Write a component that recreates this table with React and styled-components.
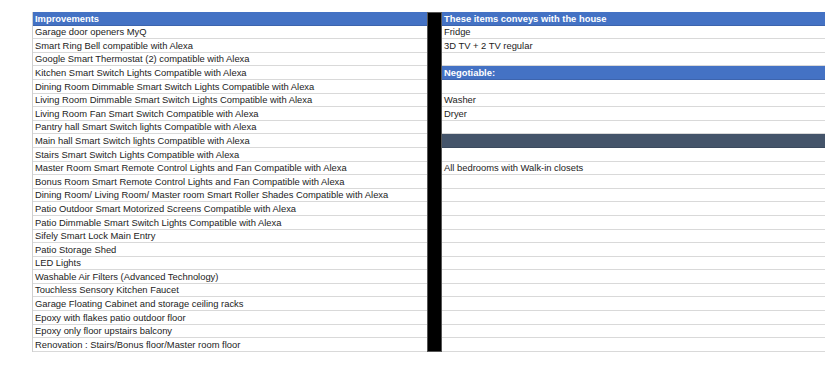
import React from "react";
import styled, { createGlobalStyle } from "styled-components";

const Global = createGlobalStyle`
  html, body { margin: 0; padding: 0; background: #ffffff; }
  body { font-family: "Liberation Sans", Arial, Helvetica, sans-serif; overflow: hidden; }
`;

const Page = styled.div`
  width: 825px;
  height: 376px;
  overflow: hidden;
  padding: 12px 0 0 32px;
  box-sizing: border-box;
  display: flex;
  align-items: flex-start;
`;

const Table = styled.div`
  display: flex;
  flex-direction: column;
  width: ${(p) => p.$width}px;
  flex-shrink: 0;
  border-left: ${(p) => (p.$bordered ? "1px solid #cfcfcf" : "none")};
  box-sizing: border-box;
`;

const Divider = styled.div`
  width: 15px;
  height: 340px;
  flex-shrink: 0;
  background: #000;
  box-shadow: inset 0 0 0 1px #555;
`;

const Row = styled.div`
  height: 13.6px;
  box-sizing: border-box;
  display: flex;
  align-items: center;
  padding-left: 2px;
  font-size: 9.4px;
  line-height: 1;
  white-space: nowrap;
  overflow: hidden;
  color: ${(p) => (p.$kind === "head" ? "#ffffff" : "#1c1c1c")};
  font-weight: ${(p) => (p.$kind === "head" ? 700 : 400)};
  background: ${(p) =>
    p.$kind === "head" ? "#4472c4" : p.$kind === "slate" ? "#44546a" : "#ffffff"};
  border-bottom: 1px solid
    ${(p) => (p.$kind === "head" ? "#3d64ad" : p.$kind === "slate" ? "#3b4a5e" : "#d9d9d9")};
`;

const improvements = [
  "Garage door openers MyQ",
  "Smart Ring Bell compatible with Alexa",
  "Google Smart Thermostat (2) compatible with Alexa",
  "Kitchen Smart Switch Lights Compatible with Alexa",
  "Dining Room Dimmable Smart Switch Lights Compatible with Alexa",
  "Living Room Dimmable Smart Switch Lights Compatible with Alexa",
  "Living Room Fan Smart Switch Compatible with Alexa",
  "Pantry hall Smart Switch lights Compatible with Alexa",
  "Main hall Smart Switch lights Compatible with Alexa",
  "Stairs Smart Switch Lights Compatible with Alexa",
  "Master Room Smart Remote Control Lights and Fan Compatible with Alexa",
  "Bonus Room Smart Remote Control Lights and Fan Compatible with Alexa",
  "Dining Room/ Living Room/ Master room Smart Roller Shades Compatible with Alexa",
  "Patio Outdoor Smart Motorized Screens Compatible with Alexa",
  "Patio Dimmable Smart Switch Lights Compatible with Alexa",
  "Sifely Smart Lock Main Entry",
  "Patio Storage Shed",
  "LED Lights",
  "Washable Air Filters (Advanced Technology)",
  "Touchless Sensory Kitchen Faucet",
  "Garage Floating Cabinet and storage ceiling racks",
  "Epoxy with flakes patio outdoor floor",
  "Epoxy only floor upstairs balcony",
  "Renovation : Stairs/Bonus floor/Master room floor",
];

const rightRows = [
  { text: "These items conveys with the house", kind: "head" },
  { text: "Fridge" },
  { text: "3D TV + 2 TV regular" },
  { text: "" },
  { text: "Negotiable:", kind: "head" },
  { text: "" },
  { text: "Washer" },
  { text: "Dryer" },
  { text: "" },
  { text: "", kind: "slate" },
  { text: "" },
  { text: "All bedrooms with Walk-in closets" },
  ...Array.from({ length: 13 }, () => ({ text: "" })),
];

export default function App() {
  return (
    <>
      <Global />
      <Page>
        <Table $width={395} $bordered>
          <Row $kind="head">Improvements</Row>
          {improvements.map((t, i) => (
            <Row key={i}>{t}</Row>
          ))}
        </Table>
        <Divider />
        <Table $width={383}>
          {rightRows.map((r, i) => (
            <Row key={i} $kind={r.kind}>
              {r.text}
            </Row>
          ))}
        </Table>
      </Page>
    </>
  );
}
